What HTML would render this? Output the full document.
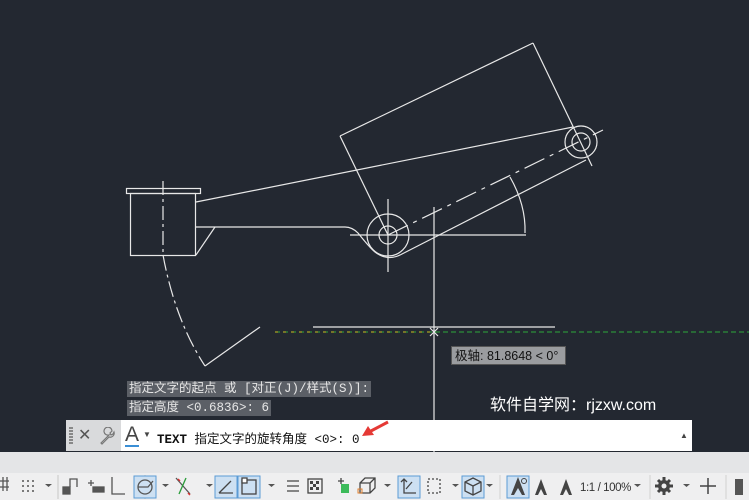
<!DOCTYPE html>
<html><head><meta charset="utf-8"><style>
html,body{margin:0;padding:0;width:749px;height:500px;overflow:hidden;background:#232831;font-family:"Liberation Sans","Noto Sans CJK SC",sans-serif;}
.abs{position:absolute}
.hist{position:absolute;background:#5b5f66;color:#e6e6e6;font:12.5px "Liberation Mono","Noto Sans CJK SC",monospace;line-height:16px;padding:0 2px;white-space:nowrap}
.cmd{position:absolute;left:66px;top:420px;width:626px;height:31px;background:#fff}
.grip{position:absolute;left:0;top:0;width:55px;height:31px;background:#d9dadc}
.sb{position:absolute;left:0;top:452px;width:749px;height:48px;background:#e4e5e7}
.bar{position:absolute;left:0;top:473px;width:749px;height:27px;background:#efeff0}
</style></head><body>
<svg class="abs" style="left:0;top:0" width="749" height="452" viewBox="0 0 749 452">
<g stroke="#e8e8e8" stroke-width="1.2" fill="none">
<rect x="126.5" y="188.5" width="74" height="5"/>
<rect x="130.5" y="193.5" width="65" height="62"/>
<line x1="163" y1="181" x2="163" y2="252" stroke-dasharray="14,4,3,4"/>
<path d="M163 255 Q175 320 205 366" stroke-dasharray="16,4,3,4"/>
<line x1="205" y1="366" x2="260" y2="327"/>
<line x1="196" y1="202" x2="573" y2="127"/>
<path d="M196 227 L345 227 Q352 227 358 233 Q370 248 375 252 Q388 262 402 254 L586 160"/>
<path d="M196 255 L215 227"/>
<circle cx="388" cy="235" r="21"/>
<circle cx="388" cy="235" r="9"/>
<line x1="388" y1="199" x2="388" y2="272"/>
<line x1="350" y1="235" x2="526" y2="235"/>
<circle cx="581" cy="142" r="16"/>
<circle cx="581" cy="142" r="9"/>
<line x1="388" y1="235" x2="603" y2="130" stroke-dasharray="22,6,4,6"/>
<line x1="340" y1="136" x2="533" y2="43"/>
<line x1="533" y1="43" x2="592" y2="166"/>
<line x1="340" y1="136" x2="388" y2="235"/>
<path d="M510 177 Q526 205 525 233"/>
<line x1="434" y1="207" x2="434" y2="452"/>
<line x1="313" y1="327" x2="555" y2="327"/>
<path d="M430 328 L438 336 M438 328 L430 336"/>
</g>
<line x1="275" y1="332" x2="749" y2="332" stroke="#2ea83a" stroke-width="1" stroke-dasharray="5,3"/>
<line x1="275" y1="332" x2="430" y2="332" stroke="#c8c020" stroke-width="1" stroke-dasharray="3,5"/>
</svg>
<div class="abs" style="left:451px;top:346px;width:115px;height:19px;background:#9a9c9f;border:1px solid #555;font-size:12.5px;line-height:19px;color:#111;padding-left:3px;box-sizing:border-box">极轴: 81.8648 &lt; 0°</div>
<div class="abs" style="left:490px;top:391px;color:#fff;font-size:16px">软件自学网：rjzxw.com</div>
<div class="hist" style="left:127px;top:381px">指定文字的起点 或 [对正(J)/样式(S)]:</div>
<div class="hist" style="left:127px;top:400px">指定高度 &lt;0.6836&gt;: 6</div>
<div class="cmd">
<div class="grip">
<div class="abs" style="left:3px;top:7px;width:4px;height:18px;background:repeating-linear-gradient(#888 0 2px,transparent 2px 3px)"></div>
<div class="abs" style="left:12px;top:5px;font-size:16px;color:#555">✕</div>
<svg class="abs" style="left:32px;top:7px" width="18" height="18" viewBox="0 0 18 18"><path d="M3 16l8-8a4 4 0 1 1 3-4l-2 2 1 2 2-1 1-2a4 4 0 0 1-5 5l-7 7z" fill="none" stroke="#777" stroke-width="1.2"/></svg>
</div>
<div class="abs" style="left:59px;top:3px;font-size:21px;color:#444;line-height:24px;border-bottom:2px solid #3a8fd6;height:22px">A</div>
<div class="abs" style="left:77px;top:10px;font-size:8px;color:#444">▼</div>
<div class="abs" style="left:91px;top:8px;font:bold 12.5px 'Liberation Mono','Noto Sans CJK SC',monospace;color:#111;white-space:nowrap">TEXT <span style="font-weight:normal">指定文字的旋转角度 &lt;0&gt;: 0</span></div>
<div class="abs" style="left:614px;top:11px;font-size:8px;color:#444">▲</div>
</div>
<svg class="abs" style="left:355px;top:415px" width="40" height="25" viewBox="0 0 40 25"><path d="M33 7 L14 17" stroke="#e53935" stroke-width="3"/><path d="M7 21 L13 11 L19 20 Z" fill="#e53935"/></svg>
<div class="sb"></div>
<div class="bar"></div>
<svg class="abs" style="left:0;top:473px" width="749" height="27" viewBox="0 0 749 27">
<g fill="none" stroke="#555" stroke-width="1.3">
<path d="M0 8h9M0 14h9M3 4v14M7 4v14"/>
<g fill="#555" stroke="none"><circle cx="23" cy="8" r="1"/><circle cx="28" cy="8" r="1"/><circle cx="33" cy="8" r="1"/><circle cx="23" cy="13" r="1"/><circle cx="28" cy="13" r="1"/><circle cx="33" cy="13" r="1"/><circle cx="23" cy="18" r="1"/><circle cx="28" cy="18" r="1"/><circle cx="33" cy="18" r="1"/>
<path d="M45 11h7l-3.5 3z"/></g>
<path d="M58 2v24M145 2v24" stroke="#d0d0d0"/>
<rect x="63" y="14" width="7" height="7" fill="#555"/><path d="M70 14V6h7v8"/>
<path d="M88 10h6M91 7v6"/><rect x="93" y="14" width="11" height="5" fill="#555"/>
<path d="M112 4v17h13"/>
</g>
<rect x="134" y="3" width="22" height="22" fill="#cde0f2" stroke="#5b9bd5"/>
<g fill="none" stroke="#555" stroke-width="1.3">
<circle cx="145" cy="14" r="7"/><path d="M138 14h10l5-6"/>
</g>
<g fill="#555"><path d="M162 11h7l-3.5 3zM206 11h7l-3.5 3zM268 11h7l-3.5 3zM384 11h7l-3.5 3zM452 11h7l-3.5 3zM486 11h7l-3.5 3zM683 11h7l-3.5 3zM634 11h7l-3.5 3z"/></g>
<path d="M176 5l14 16" stroke="#555" stroke-width="1.3"/><path d="M186 5l-7 16" stroke="#2a9d3a" stroke-width="1.3"/><path d="M178 6l2 2M188 20l2 2" stroke="#d33" stroke-width="1.5"/>
<rect x="215" y="3" width="22" height="22" fill="#cde0f2" stroke="#5b9bd5"/>
<rect x="238" y="3" width="22" height="22" fill="#cde0f2" stroke="#5b9bd5"/>
<rect x="507" y="3" width="22" height="22" fill="#cde0f2" stroke="#5b9bd5"/>
<rect x="398" y="3" width="22" height="22" fill="#cde0f2" stroke="#5b9bd5"/>
<rect x="462" y="3" width="22" height="22" fill="#cde0f2" stroke="#5b9bd5"/>
<g fill="none" stroke="#444" stroke-width="1.3">
<path d="M219 20h14M219 20l12-12"/>
<rect x="242" y="7" width="14" height="14"/><rect x="242" y="5" width="5" height="5" fill="#fff"/>
<path d="M287 8h12M287 13h12M287 18h12"/>
<rect x="308" y="6" width="14" height="14"/>
<path d="M341 5v6M338 8h6"/><path d="M360 10l5-5h10v10l-5 5h-10zM360 10h10v10M370 10l5-5"/>
<path d="M404 6v14h12M407 9l-3-3-3 3M406 16l6-7"/>
<rect x="428" y="6" width="12" height="14" stroke-dasharray="2,2"/>
<path d="M473 5l8 4v9l-8 4-8-4V9zM465 9l8 4 8-4M473 13v9"/>
</g>
<rect x="341" y="11" width="8" height="9" fill="#3cba5a"/>
<rect x="358" y="16" width="4" height="4" fill="none" stroke="#e08030"/>
<g fill="#444"><rect x="310" y="8" width="3" height="3"/><rect x="316" y="8" width="3" height="3"/><rect x="313" y="11" width="3" height="3"/><rect x="310" y="14" width="3" height="3"/><rect x="316" y="14" width="3" height="3"/>
<path d="M518 4l-7 18h3l4-7 4 7h3z"/><path d="M541 6l-6 16h3l3-6 3 6h3z"/><path d="M566 6l-6 16h3l3-6 3 6h3z"/>
<circle cx="664" cy="13" r="6"/></g>
<path d="M664 4v18M655 13h18M658 7l12 12M670 7l-12 12" stroke="#444" stroke-width="3"/>
<circle cx="664" cy="13" r="2.5" fill="#efeff0"/>
<circle cx="524" cy="8" r="2.5" fill="none" stroke="#444"/>
<path d="M700 13h16M708 5v16" stroke="#444" stroke-width="1.5"/>
<path d="M726 2v24M650 2v24M500 2v24" stroke="#d0d0d0"/>
<rect x="735" y="6" width="8" height="16" fill="#555"/>
<text x="580" y="18" font-family="Liberation Sans" font-size="11.5" fill="#333" letter-spacing="-0.4">1:1 / 100%</text>
</svg>
</body></html>
